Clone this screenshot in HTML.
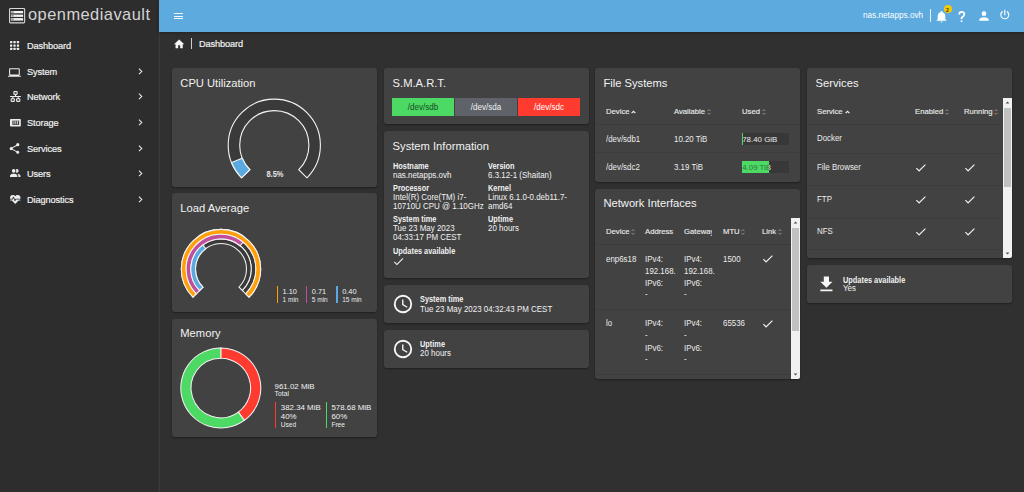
<!DOCTYPE html><html><head><meta charset="utf-8"><style>
*{margin:0;padding:0;box-sizing:border-box}
html,body{width:1024px;height:492px;overflow:hidden;background:#303030;font-family:"Liberation Sans", sans-serif}
.t{position:absolute;white-space:nowrap}
.card{position:absolute;background:#424242;border-radius:3px;box-shadow:0 1px 2px rgba(0,0,0,.35)}
svg{overflow:visible}
</style></head><body>
<div style="position:absolute;left:0.00px;top:0.00px;width:158.00px;height:492.00px;background:#2d2d2d"></div>
<div style="position:absolute;left:158.70px;top:0.00px;width:1.00px;height:492.00px;background:#3a3a3a"></div>
<svg style="position:absolute;left:9px;top:8px" width="16.2" height="15.4" viewBox="0 0 16.2 15.4">
<rect x="0.55" y="0.55" width="15.1" height="14.3" rx="0.9" fill="none" stroke="#d8d8d8" stroke-width="1.1"/>
<rect x="1.9" y="3.0" width="12.2" height="2.3" fill="#f2f2f2"/>
<rect x="1.9" y="6.6" width="12.2" height="2.3" fill="#f2f2f2"/>
<rect x="1.9" y="10.1" width="12.2" height="2.5" fill="#f2f2f2"/>
<rect x="2.2" y="3.3" width="2.6" height="1.7" fill="#9a9a9a"/>
<rect x="2.2" y="6.9" width="2.6" height="1.7" fill="#9a9a9a"/>
<rect x="2.2" y="10.4" width="2.6" height="1.9" fill="#9a9a9a"/>
</svg>
<div class="t" style="left:28.00px;top:5.02px;font-size:16.4px;line-height:18.84px;color:#d4d4d4;font-weight:400;letter-spacing:0.48px">openmediavault</div>
<div class="t" style="left:27.00px;top:41.00px;font-size:9.2px;line-height:10.57px;color:#f0f0f0;font-weight:400;-webkit-text-stroke:0.2px #f0f0f0;letter-spacing:-0.1px">Dashboard</div>
<div class="t" style="left:27.00px;top:67.00px;font-size:9.2px;line-height:10.57px;color:#f0f0f0;font-weight:400;-webkit-text-stroke:0.2px #f0f0f0;letter-spacing:-0.1px">System</div>
<svg style="position:absolute;left:133.70px;top:64.70px" width="12.80" height="12.80" viewBox="0 0 24 24" preserveAspectRatio="none"><path fill="#e8e8e8" d="M8.59,16.58L13.17,12L8.59,7.41L10,6L16,12L10,18L8.59,16.58Z"/></svg>
<div class="t" style="left:27.00px;top:92.00px;font-size:9.2px;line-height:10.57px;color:#f0f0f0;font-weight:400;-webkit-text-stroke:0.2px #f0f0f0;letter-spacing:-0.1px">Network</div>
<svg style="position:absolute;left:133.70px;top:90.30px" width="12.80" height="12.80" viewBox="0 0 24 24" preserveAspectRatio="none"><path fill="#e8e8e8" d="M8.59,16.58L13.17,12L8.59,7.41L10,6L16,12L10,18L8.59,16.58Z"/></svg>
<div class="t" style="left:27.00px;top:118.00px;font-size:9.2px;line-height:10.57px;color:#f0f0f0;font-weight:400;-webkit-text-stroke:0.2px #f0f0f0;letter-spacing:-0.1px">Storage</div>
<svg style="position:absolute;left:133.70px;top:115.90px" width="12.80" height="12.80" viewBox="0 0 24 24" preserveAspectRatio="none"><path fill="#e8e8e8" d="M8.59,16.58L13.17,12L8.59,7.41L10,6L16,12L10,18L8.59,16.58Z"/></svg>
<div class="t" style="left:27.00px;top:144.00px;font-size:9.2px;line-height:10.57px;color:#f0f0f0;font-weight:400;-webkit-text-stroke:0.2px #f0f0f0;letter-spacing:-0.1px">Services</div>
<svg style="position:absolute;left:133.70px;top:141.50px" width="12.80" height="12.80" viewBox="0 0 24 24" preserveAspectRatio="none"><path fill="#e8e8e8" d="M8.59,16.58L13.17,12L8.59,7.41L10,6L16,12L10,18L8.59,16.58Z"/></svg>
<div class="t" style="left:27.00px;top:169.00px;font-size:9.2px;line-height:10.57px;color:#f0f0f0;font-weight:400;-webkit-text-stroke:0.2px #f0f0f0;letter-spacing:-0.1px">Users</div>
<svg style="position:absolute;left:133.70px;top:167.10px" width="12.80" height="12.80" viewBox="0 0 24 24" preserveAspectRatio="none"><path fill="#e8e8e8" d="M8.59,16.58L13.17,12L8.59,7.41L10,6L16,12L10,18L8.59,16.58Z"/></svg>
<div class="t" style="left:27.00px;top:195.00px;font-size:9.2px;line-height:10.57px;color:#f0f0f0;font-weight:400;-webkit-text-stroke:0.2px #f0f0f0;letter-spacing:-0.1px">Diagnostics</div>
<svg style="position:absolute;left:133.70px;top:192.70px" width="12.80" height="12.80" viewBox="0 0 24 24" preserveAspectRatio="none"><path fill="#e8e8e8" d="M8.59,16.58L13.17,12L8.59,7.41L10,6L16,12L10,18L8.59,16.58Z"/></svg>
<svg style="position:absolute;left:10.3px;top:41.2px" width="9" height="9" viewBox="0 0 9 9"><rect x="0.0" y="0.0" width="2.3" height="2.3" rx="0.4" fill="#eeeeee"/><rect x="3.4" y="0.0" width="2.3" height="2.3" rx="0.4" fill="#eeeeee"/><rect x="6.8" y="0.0" width="2.3" height="2.3" rx="0.4" fill="#eeeeee"/><rect x="0.0" y="3.4" width="2.3" height="2.3" rx="0.4" fill="#eeeeee"/><rect x="3.4" y="3.4" width="2.3" height="2.3" rx="0.4" fill="#eeeeee"/><rect x="6.8" y="3.4" width="2.3" height="2.3" rx="0.4" fill="#eeeeee"/><rect x="0.0" y="6.8" width="2.3" height="2.3" rx="0.4" fill="#eeeeee"/><rect x="3.4" y="6.8" width="2.3" height="2.3" rx="0.4" fill="#eeeeee"/><rect x="6.8" y="6.8" width="2.3" height="2.3" rx="0.4" fill="#eeeeee"/></svg>
<svg style="position:absolute;left:8.30px;top:65.60px" width="12.90" height="12.90" viewBox="0 0 24 24" preserveAspectRatio="none"><path fill="#ececec" d="M4,6H20V16H4M20,18A2,2 0 0,0 22,16V6C22,4.89 21.1,4 20,4H4C2.89,4 2,4.89 2,6V16A2,2 0 0,0 4,18H0V20H24V18H20Z"/></svg>
<svg style="position:absolute;left:8.60px;top:89.80px" width="13.00" height="13.00" viewBox="0 0 24 24" preserveAspectRatio="none"><path fill="#ececec" d="M10,2C8.89,2 8,2.89 8,4V7C8,8.11 8.89,9 10,9H11V11H2V13H6V15H5C3.89,15 3,15.89 3,17V20C3,21.11 3.89,22 5,22H9C10.11,22 11,21.11 11,20V17C11,15.89 10.11,15 9,15H8V13H16V15H15C13.89,15 13,15.89 13,17V20C13,21.11 13.89,22 15,22H19C20.11,22 21,21.11 21,20V17C21,15.89 20.11,15 19,15H18V13H22V11H13V9H14C15.11,9 16,8.11 16,7V4C16,2.89 15.11,2 14,2H10M10,4H14V7H10V4M5,17H9V20H5V17M15,17H19V20H15V17Z"/></svg>
<svg style="position:absolute;left:9.6px;top:118.75px" width="10.8" height="7.4" viewBox="0 0 10.8 7.6" preserveAspectRatio="none">
<rect x="0" y="0" width="10.8" height="7.6" rx="0.7" fill="#ececec"/>
<rect x="2.4" y="1.7" width="6.7" height="4.3" fill="#2d2d2d"/>
<rect x="3.5" y="1.7" width="0.9" height="3.6" fill="#ececec"/>
<rect x="5.35" y="1.7" width="0.9" height="3.6" fill="#ececec"/>
<rect x="7.2" y="1.7" width="0.9" height="3.6" fill="#ececec"/>
</svg>
<svg style="position:absolute;left:8.40px;top:141.60px" width="13.00" height="13.00" viewBox="0 0 24 24" preserveAspectRatio="none"><path fill="#ececec" d="M18,16.08C17.24,16.08 16.56,16.38 16.04,16.85L8.91,12.7C8.96,12.47 9,12.24 9,12C9,11.76 8.96,11.53 8.91,11.3L15.96,7.19C16.5,7.69 17.21,8 18,8A3,3 0 0,0 21,5A3,3 0 0,0 18,2A3,3 0 0,0 15,5C15,5.24 15.04,5.47 15.09,5.7L8.04,9.81C7.5,9.31 6.79,9 6,9A3,3 0 0,0 3,12A3,3 0 0,0 6,15C6.79,15 7.5,14.69 8.04,14.19L15.16,18.34C15.11,18.55 15.08,18.77 15.08,19C15.08,20.61 16.39,21.91 18,21.91C19.61,21.91 20.92,20.61 20.92,19A2.92,2.92 0 0,0 18,16.08Z"/></svg>
<svg style="position:absolute;left:8.90px;top:166.50px" width="12.50" height="12.50" viewBox="0 0 24 24" preserveAspectRatio="none"><path fill="#ececec" d="M16 17V19H2V17S2 13 9 13 16 17 16 17M12.5 7.5A3.5 3.5 0 1 0 9 11A3.5 3.5 0 0 0 12.5 7.5M15.94 13A5.32 5.32 0 0 1 18 17V19H22V17S22 13.37 15.94 13M15 4A3.39 3.39 0 0 0 13.07 4.59A5 5 0 0 1 13.07 10.41A3.39 3.39 0 0 0 15 11A3.5 3.5 0 0 0 18.5 7.5A3.5 3.5 0 0 0 15 4Z"/></svg>
<svg style="position:absolute;left:8.90px;top:193.20px" width="12.50" height="12.50" viewBox="0 0 24 24" preserveAspectRatio="none"><path fill="#ececec" d="M7.5,4A5.5,5.5 0 0,0 2,9.5C2,10 2.09,10.5 2.22,11H6.3L7.57,7.63C7.87,6.83 9.05,6.75 9.43,7.63L11.5,13L12.09,11.58C12.22,11.25 12.57,11 13,11H21.78C21.910,10.5 22,10 22,9.5A5.5,5.5 0 0,0 16.5,4C14.64,4 13,4.93 12,6.34C11,4.93 9.36,4 7.5,4V4M3,12.5A1,1 0 0,0 2,13.5A1,1 0 0,0 3,14.5H5.44L11,20C12,20.9 12,20.9 13,20L18.56,14.5H21A1,1 0 0,0 22,13.5A1,1 0 0,0 21,12.5H13.4L12.47,14.8C12.07,15.81 10.92,15.67 10.55,14.830L8.5,9.5L7.54,11.83C7.39,12.21 7.05,12.5 6.6,12.5H3Z"/></svg>
<div style="position:absolute;left:158.70px;top:0.00px;width:865.30px;height:32.40px;background:#5caade;box-shadow:0 1px 3px rgba(0,0,0,.3)"></div>
<div style="position:absolute;left:173.70px;top:12.80px;width:9.50px;height:1.30px;background:#f4f8fb"></div>
<div style="position:absolute;left:173.70px;top:15.50px;width:9.50px;height:1.30px;background:#f4f8fb"></div>
<div style="position:absolute;left:173.70px;top:18.20px;width:9.50px;height:1.30px;background:#f4f8fb"></div>
<div class="t" style="left:863.00px;top:11.02px;font-size:8.2px;line-height:9.42px;color:#ffffff;font-weight:400;">nas.netapps.ovh</div>
<div style="position:absolute;left:930.30px;top:9.00px;width:0.90px;height:13.00px;background:#e8f2fa"></div>
<svg style="position:absolute;left:934.50px;top:9.50px" width="13.00" height="13.00" viewBox="0 0 24 24" preserveAspectRatio="none"><path fill="#ffffff" d="M21,19V20H3V19L5,17V11C5,7.9 7.03,5.17 10,4.29C10,4.19 10,4.1 10,4A2,2 0 0,1 12,2A2,2 0 0,1 14,4C14,4.1 14,4.19 14,4.29C16.97,5.17 19,7.9 19,11V17L21,19M14,21A2,2 0 0,1 12,23A2,2 0 0,1 10,21"/></svg>
<div style="position:absolute;left:943.5px;top:5.3px;width:8px;height:8px;border-radius:50%;background:#f5c800"></div>
<div class="t" style="left:747.50px;width:400px;text-align:center;top:8.02px;font-size:5px;line-height:5.75px;color:#333;font-weight:700;">2</div>
<svg style="position:absolute;left:955.00px;top:9.60px" width="13.60" height="13.20" viewBox="0 0 24 24" preserveAspectRatio="none"><path fill="#ffffff" d="M10,19H13V22H10V19M12,2C17.35,2.22 19.68,7.62 16.5,11.67C15.67,12.67 14.33,13.33 13.67,14.17C13,15 13,16 13,17H10C10,15.33 10,13.920 10.67,12.92C11.33,11.92 12.670,11.33 13.5,10.67C15.92,8.43 15.32,5.26 12,5A3,3 0 0,0 9,8H6A6,6 0 0,1 12,2Z"/></svg>
<svg style="position:absolute;left:977.00px;top:8.50px" width="14.00" height="14.00" viewBox="0 0 24 24" preserveAspectRatio="none"><path fill="#ffffff" d="M12,4A4,4 0 0,1 16,8A4,4 0 0,1 12,12A4,4 0 0,1 8,8A4,4 0 0,1 12,4M12,14C16.42,14 20,15.79 20,18V20H4V18C4,15.79 7.58,14 12,14Z"/></svg>
<svg style="position:absolute;left:998.30px;top:8.20px" width="13.60" height="13.60" viewBox="0 0 24 24" preserveAspectRatio="none"><path fill="#ffffff" d="M16.56,5.44L15.11,6.89C16.84,7.94 18,9.83 18,12A6,6 0 0,1 12,18A6,6 0 0,1 6,12C6,9.830 7.16,7.94 8.88,6.88L7.44,5.44C5.36,6.88 4,9.28 4,12A8,8 0 0,0 12,20A8,8 0 0,0 20,12C20,9.28 18.64,6.88 16.56,5.44M13,3H11V13H13"/></svg>
<svg style="position:absolute;left:172.70px;top:38.10px" width="12.30" height="12.30" viewBox="0 0 24 24" preserveAspectRatio="none"><path fill="#f6f6f6" d="M10,20V14H14V20H19V12H22L12,3L2,12H5V20H10Z"/></svg>
<div style="position:absolute;left:191.20px;top:38.00px;width:0.90px;height:10.80px;background:#cfcfcf"></div>
<div class="t" style="left:199.00px;top:39.00px;font-size:9.2px;line-height:10.57px;color:#f0f0f0;font-weight:400;-webkit-text-stroke:0.2px #f0f0f0;letter-spacing:-0.1px">Dashboard</div>
<div class="card" style="left:171.7px;top:68px;width:205.2px;height:119.00px"></div>
<div class="t" style="left:180.30px;top:77.01px;font-size:11.2px;line-height:12.87px;color:#f2f2f2;font-weight:400;">CPU Utilization</div>
<div class="card" style="left:171.7px;top:193.2px;width:205.2px;height:118.80px"></div>
<div class="t" style="left:180.30px;top:202.01px;font-size:11.2px;line-height:12.87px;color:#f2f2f2;font-weight:400;">Load Average</div>
<div class="card" style="left:171.7px;top:318.5px;width:205.2px;height:118.50px"></div>
<div class="t" style="left:180.30px;top:327.01px;font-size:11.2px;line-height:12.87px;color:#f2f2f2;font-weight:400;">Memory</div>
<div class="card" style="left:384px;top:68px;width:205.2px;height:56.00px"></div>
<div class="t" style="left:392.60px;top:77.01px;font-size:11.2px;line-height:12.87px;color:#f2f2f2;font-weight:400;">S.M.A.R.T.</div>
<div class="card" style="left:384px;top:130.7px;width:205.2px;height:147.10px"></div>
<div class="t" style="left:392.60px;top:140.01px;font-size:11.2px;line-height:12.87px;color:#f2f2f2;font-weight:400;">System Information</div>
<div class="card" style="left:384px;top:285px;width:205.2px;height:37.80px"></div>
<div class="card" style="left:384px;top:329.7px;width:205.2px;height:37.90px"></div>
<div class="card" style="left:594.8px;top:68px;width:205.2px;height:114.00px"></div>
<div class="t" style="left:603.40px;top:77.01px;font-size:11.2px;line-height:12.87px;color:#f2f2f2;font-weight:400;">File Systems</div>
<div class="card" style="left:594.8px;top:188.7px;width:205.2px;height:190.30px"></div>
<div class="t" style="left:603.40px;top:197.01px;font-size:11.2px;line-height:12.87px;color:#f2f2f2;font-weight:400;">Network Interfaces</div>
<div class="card" style="left:807px;top:68px;width:205.2px;height:190.30px"></div>
<div class="t" style="left:815.60px;top:77.01px;font-size:11.2px;line-height:12.87px;color:#f2f2f2;font-weight:400;">Services</div>
<div class="card" style="left:807px;top:265.3px;width:205.2px;height:37.50px"></div>
<svg style="position:absolute;left:0;top:0" width="1024" height="492" viewBox="0 0 1024 492">
<path d="M241.702,177.798 A46.1,46.1 0 1 1 306.898,177.798 L298.766,169.666 A34.6,34.6 0 1 0 249.834,169.666 Z" fill="#3a3a3a" stroke="#f4f4f4" stroke-width="1.1" stroke-linejoin="miter"/>
<path d="M241.702,177.798 A46.1,46.1 0 0 1 231.572,162.507 L242.231,158.189 A34.6,34.6 0 0 0 249.834,169.666 Z" fill="#5aa9e0" stroke="#f4f4f4" stroke-width="1.1"/>
<path d="M192.928,297.172 A39.7,39.7 0 1 1 249.072,297.172 L245.678,293.778 A34.9,34.9 0 1 0 196.322,293.778 Z" fill="#3a3a3a" stroke="#f4f4f4" stroke-width="1.05"/>
<path d="M196.322,293.778 A34.9,34.9 0 1 1 245.678,293.778 L242.355,290.455 A30.2,30.2 0 1 0 199.645,290.455 Z" fill="#3a3a3a" stroke="#f4f4f4" stroke-width="1.05"/>
<path d="M199.645,290.455 A30.2,30.2 0 1 1 242.355,290.455 L239.031,287.131 A25.5,25.5 0 1 0 202.969,287.131 Z" fill="#3a3a3a" stroke="#f4f4f4" stroke-width="1.05"/>
<path d="M192.928,297.172 A39.7,39.7 0 1 1 249.072,297.172 L245.678,293.778 A34.9,34.9 0 1 0 196.322,293.778 Z" fill="#ff9f0a" stroke="#f4f4f4" stroke-width="1.05"/>
<path d="M196.322,293.778 A34.9,34.9 0 0 1 243.092,242.082 L240.117,245.721 A30.2,30.2 0 0 0 199.645,290.455 Z" fill="#bf4f9c" stroke="#f4f4f4" stroke-width="1.05"/>
<path d="M199.645,290.455 A30.2,30.2 0 0 1 202.902,244.924 L205.718,248.686 A25.5,25.5 0 0 0 202.969,287.131 Z" fill="#5aa9e0" stroke="#f4f4f4" stroke-width="1.05"/>
<path d="M220.800,348.000 A40,40 0 0 1 244.311,420.361 L238.316,412.109 A29.8,29.8 0 0 0 220.800,358.200 Z" fill="#ff3b30" stroke="#f4f4f4" stroke-width="1.05"/>
<path d="M220.8,348 A40,40 0 1 0 244.311,420.361 L238.316,412.109 A29.8,29.8 0 1 1 220.8,358.2 Z" fill="#4cd964" stroke="#f4f4f4" stroke-width="1.05"/>
</svg>
<div class="t" style="left:74.50px;width:400px;text-align:center;top:170.02px;font-size:8.2px;line-height:9.42px;color:#e4e4e4;font-weight:700;transform:scaleX(0.92);transform-origin:center top;">8.5%</div>
<div style="position:absolute;left:276.60px;top:286.00px;width:1.60px;height:17.40px;background:#ff9f0a"></div>
<div class="t" style="left:282.60px;top:288.01px;font-size:7.4px;line-height:8.50px;color:#f0f0f0;font-weight:400;">1.10</div>
<div class="t" style="left:282.60px;top:295.99px;font-size:6.5px;line-height:7.47px;color:#ececec;font-weight:400;">1 min</div>
<div style="position:absolute;left:305.80px;top:286.00px;width:1.60px;height:17.40px;background:#bf4f9c"></div>
<div class="t" style="left:311.80px;top:288.01px;font-size:7.4px;line-height:8.50px;color:#f0f0f0;font-weight:400;">0.71</div>
<div class="t" style="left:311.80px;top:295.99px;font-size:6.5px;line-height:7.47px;color:#ececec;font-weight:400;">5 min</div>
<div style="position:absolute;left:336.20px;top:286.00px;width:1.60px;height:17.40px;background:#5aa9e0"></div>
<div class="t" style="left:342.20px;top:288.01px;font-size:7.4px;line-height:8.50px;color:#f0f0f0;font-weight:400;">0.40</div>
<div class="t" style="left:342.20px;top:295.99px;font-size:6.5px;line-height:7.47px;color:#ececec;font-weight:400;">15 min</div>
<div class="t" style="left:274.60px;top:382.00px;font-size:7.9px;line-height:9.08px;color:#f2f2f2;font-weight:400;">961.02 MiB</div>
<div class="t" style="left:274.60px;top:390.01px;font-size:6.8px;line-height:7.81px;color:#ececec;font-weight:400;">Total</div>
<div style="position:absolute;left:274.90px;top:402.00px;width:1.60px;height:26.00px;background:#ff3b30"></div>
<div class="t" style="left:280.80px;top:403.00px;font-size:7.9px;line-height:9.08px;color:#f2f2f2;font-weight:400;">382.34 MiB</div>
<div class="t" style="left:280.80px;top:412.00px;font-size:7.9px;line-height:9.08px;color:#f2f2f2;font-weight:400;">40%</div>
<div class="t" style="left:280.80px;top:421.00px;font-size:6.6px;line-height:7.58px;color:#ececec;font-weight:400;">Used</div>
<div style="position:absolute;left:325.50px;top:402.00px;width:1.60px;height:26.00px;background:#4cd964"></div>
<div class="t" style="left:331.40px;top:403.00px;font-size:7.9px;line-height:9.08px;color:#f2f2f2;font-weight:400;">578.68 MiB</div>
<div class="t" style="left:331.40px;top:412.00px;font-size:7.9px;line-height:9.08px;color:#f2f2f2;font-weight:400;">60%</div>
<div class="t" style="left:331.40px;top:421.00px;font-size:6.6px;line-height:7.58px;color:#ececec;font-weight:400;">Free</div>
<div style="position:absolute;left:392.00px;top:98.00px;width:62.00px;height:17.50px;background:#4cd964"></div>
<div class="t" style="left:223.00px;width:400px;text-align:center;top:103.00px;font-size:8.6px;line-height:9.88px;color:#1b4a23;font-weight:400;transform:scaleX(0.935);transform-origin:center top;">/dev/sdb</div>
<div style="position:absolute;left:455.00px;top:98.00px;width:62.00px;height:17.50px;background:#5f6369"></div>
<div class="t" style="left:286.00px;width:400px;text-align:center;top:103.00px;font-size:8.6px;line-height:9.88px;color:#f0f0f0;font-weight:400;transform:scaleX(0.935);transform-origin:center top;">/dev/sda</div>
<div style="position:absolute;left:518.30px;top:98.00px;width:62.20px;height:17.50px;background:#ff3b30"></div>
<div class="t" style="left:349.40px;width:400px;text-align:center;top:103.00px;font-size:8.6px;line-height:9.88px;color:#ffffff;font-weight:400;transform:scaleX(0.935);transform-origin:center top;">/dev/sdc</div>
<div class="t" style="left:392.50px;top:162.02px;font-size:8.2px;line-height:9.42px;color:#f2f2f2;font-weight:700;transform:scaleX(0.9);transform-origin:left top;">Hostname</div>
<div class="t" style="left:392.50px;top:170.99px;font-size:8.507px;line-height:9.77px;color:#f2f2f2;font-weight:400;transform:scaleX(0.935);transform-origin:left top;">nas.netapps.ovh</div>
<div class="t" style="left:392.50px;top:184.02px;font-size:8.2px;line-height:9.42px;color:#f2f2f2;font-weight:700;transform:scaleX(0.9);transform-origin:left top;">Processor</div>
<div class="t" style="left:392.50px;top:192.99px;font-size:8.507px;line-height:9.77px;color:#f2f2f2;font-weight:400;transform:scaleX(0.935);transform-origin:left top;">Intel(R) Core(TM) i7-</div>
<div class="t" style="left:392.50px;top:201.99px;font-size:8.507px;line-height:9.77px;color:#f2f2f2;font-weight:400;transform:scaleX(0.935);transform-origin:left top;">10710U CPU @ 1.10GHz</div>
<div class="t" style="left:392.50px;top:215.02px;font-size:8.2px;line-height:9.42px;color:#f2f2f2;font-weight:700;transform:scaleX(0.9);transform-origin:left top;">System time</div>
<div class="t" style="left:392.50px;top:223.99px;font-size:8.507px;line-height:9.77px;color:#f2f2f2;font-weight:400;transform:scaleX(0.935);transform-origin:left top;">Tue 23 May 2023</div>
<div class="t" style="left:392.50px;top:232.99px;font-size:8.507px;line-height:9.77px;color:#f2f2f2;font-weight:400;transform:scaleX(0.935);transform-origin:left top;">04:33:17 PM CEST</div>
<div class="t" style="left:392.50px;top:247.02px;font-size:8.2px;line-height:9.42px;color:#f2f2f2;font-weight:700;transform:scaleX(0.9);transform-origin:left top;">Updates available</div>
<svg style="position:absolute;left:392.40px;top:255.00px" width="13.00" height="13.00" viewBox="0 0 24 24" preserveAspectRatio="none"><path fill="#f0f0f0" d="M21,7L9,19L3.5,13.5L4.91,12.09L9,16.17L19.59,5.59L21,7Z"/></svg>
<div class="t" style="left:488.40px;top:162.02px;font-size:8.2px;line-height:9.42px;color:#f2f2f2;font-weight:700;transform:scaleX(0.9);transform-origin:left top;">Version</div>
<div class="t" style="left:488.40px;top:170.99px;font-size:8.507px;line-height:9.77px;color:#f2f2f2;font-weight:400;transform:scaleX(0.935);transform-origin:left top;">6.3.12-1 (Shaitan)</div>
<div class="t" style="left:488.40px;top:184.02px;font-size:8.2px;line-height:9.42px;color:#f2f2f2;font-weight:700;transform:scaleX(0.9);transform-origin:left top;">Kernel</div>
<div class="t" style="left:488.40px;top:192.99px;font-size:8.507px;line-height:9.77px;color:#f2f2f2;font-weight:400;transform:scaleX(0.935);transform-origin:left top;">Linux 6.1.0-0.deb11.7-</div>
<div class="t" style="left:488.40px;top:201.99px;font-size:8.507px;line-height:9.77px;color:#f2f2f2;font-weight:400;transform:scaleX(0.935);transform-origin:left top;">amd64</div>
<div class="t" style="left:488.40px;top:215.02px;font-size:8.2px;line-height:9.42px;color:#f2f2f2;font-weight:700;transform:scaleX(0.9);transform-origin:left top;">Uptime</div>
<div class="t" style="left:488.40px;top:223.99px;font-size:8.507px;line-height:9.77px;color:#f2f2f2;font-weight:400;transform:scaleX(0.935);transform-origin:left top;">20 hours</div>
<svg style="position:absolute;left:391.90px;top:292.90px" width="22.00" height="22.00" viewBox="0 0 24 24" preserveAspectRatio="none"><path fill="#f6f6f6" d="M12,20A8,8 0 0,0 20,12A8,8 0 0,0 12,4A8,8 0 0,0 4,12A8,8 0 0,0 12,20M12,2A10,10 0 0,1 22,12A10,10 0 0,1 12,22C6.47,22 2,17.5 2,12A10,10 0 0,1 12,2M12.5,7V12.25L17,14.92L16.25,16.15L11,13V7H12.5Z"/></svg>
<div class="t" style="left:420.10px;top:295.02px;font-size:8.2px;line-height:9.42px;color:#f2f2f2;font-weight:700;transform:scaleX(0.9);transform-origin:left top;">System time</div>
<div class="t" style="left:420.30px;top:304.99px;font-size:8.507px;line-height:9.77px;color:#f2f2f2;font-weight:400;transform:scaleX(0.935);transform-origin:left top;">Tue 23 May 2023 04:32:43 PM CEST</div>
<svg style="position:absolute;left:391.90px;top:337.60px" width="22.00" height="22.00" viewBox="0 0 24 24" preserveAspectRatio="none"><path fill="#f6f6f6" d="M12,20A8,8 0 0,0 20,12A8,8 0 0,0 12,4A8,8 0 0,0 4,12A8,8 0 0,0 12,20M12,2A10,10 0 0,1 22,12A10,10 0 0,1 12,22C6.47,22 2,17.5 2,12A10,10 0 0,1 12,2M12.5,7V12.25L17,14.92L16.25,16.15L11,13V7H12.5Z"/></svg>
<div class="t" style="left:420.10px;top:340.02px;font-size:8.2px;line-height:9.42px;color:#f2f2f2;font-weight:700;transform:scaleX(0.9);transform-origin:left top;">Uptime</div>
<div class="t" style="left:420.30px;top:348.99px;font-size:8.507px;line-height:9.77px;color:#f2f2f2;font-weight:400;transform:scaleX(0.935);transform-origin:left top;">20 hours</div>
<div class="t" style="left:605.60px;top:107.01px;font-size:8.1px;line-height:9.31px;color:#e8e8e8;font-weight:400;transform:scaleX(0.95);transform-origin:left top;-webkit-text-stroke:0.15px #e8e8e8;">Device</div>
<svg style="position:absolute;left:630.70px;top:110.00px" width="5" height="4" viewBox="0 0 5 4"><path d="M0.6,3.2 L2.5,1.3 L4.4,3.2" fill="none" stroke="#f0f0f0" stroke-width="1.2"/></svg>
<div class="t" style="left:673.70px;top:107.01px;font-size:8.1px;line-height:9.31px;color:#e8e8e8;font-weight:400;transform:scaleX(0.95);transform-origin:left top;-webkit-text-stroke:0.15px #e8e8e8;">Available</div>
<svg style="position:absolute;left:706.70px;top:109.00px" width="4" height="6" viewBox="0 0 4 6"><path d="M0.5,2.1 L2,0.6 L3.5,2.1" fill="none" stroke="#a8a8a8" stroke-width="0.75"/><path d="M0.5,3.9 L2,5.4 L3.5,3.9" fill="none" stroke="#a8a8a8" stroke-width="0.75"/></svg>
<div class="t" style="left:741.80px;top:107.01px;font-size:8.1px;line-height:9.31px;color:#e8e8e8;font-weight:400;transform:scaleX(0.95);transform-origin:left top;-webkit-text-stroke:0.15px #e8e8e8;">Used</div>
<svg style="position:absolute;left:762.10px;top:109.00px" width="4" height="6" viewBox="0 0 4 6"><path d="M0.5,2.1 L2,0.6 L3.5,2.1" fill="none" stroke="#a8a8a8" stroke-width="0.75"/><path d="M0.5,3.9 L2,5.4 L3.5,3.9" fill="none" stroke="#a8a8a8" stroke-width="0.75"/></svg>
<div style="position:absolute;left:594.80px;top:124.00px;width:205.20px;height:0.70px;background:#3c3c3c"></div>
<div style="position:absolute;left:594.80px;top:152.40px;width:205.20px;height:0.70px;background:#3c3c3c"></div>
<div class="t" style="left:605.60px;top:134.99px;font-size:8.453px;line-height:9.71px;color:#ececec;font-weight:400;transform:scaleX(0.935);transform-origin:left top;">/dev/sdb1</div>
<div class="t" style="left:673.70px;top:134.99px;font-size:8.453px;line-height:9.71px;color:#ececec;font-weight:400;transform:scaleX(0.935);transform-origin:left top;">10.20 TiB</div>
<div class="t" style="left:605.60px;top:162.99px;font-size:8.453px;line-height:9.71px;color:#ececec;font-weight:400;transform:scaleX(0.935);transform-origin:left top;">/dev/sdc2</div>
<div class="t" style="left:673.70px;top:162.99px;font-size:8.453px;line-height:9.71px;color:#ececec;font-weight:400;transform:scaleX(0.935);transform-origin:left top;">3.19 TiB</div>
<div style="position:absolute;left:741.80px;top:132.70px;width:47.50px;height:12.00px;background:#383838"></div>
<div class="t" style="left:742.20px;top:135.00px;font-size:7.9px;line-height:9.08px;color:#ececec;font-weight:400;">78.40 GiB</div>
<div style="position:absolute;left:741.8px;top:132.7px;width:1.04px;height:12px;background:#4cd964;overflow:hidden">
<div class="t" style="left:0.4px;top:1.62px;font-size:7.9px;line-height:9.08px;color:#2b7a3a">78.40 GiB</div></div>
<div style="position:absolute;left:741.80px;top:160.60px;width:47.50px;height:12.00px;background:#383838"></div>
<div class="t" style="left:742.20px;top:163.00px;font-size:7.9px;line-height:9.08px;color:#ececec;font-weight:400;">4.09 TiB</div>
<div style="position:absolute;left:741.8px;top:160.6px;width:27.07px;height:12px;background:#4cd964;overflow:hidden">
<div class="t" style="left:0.4px;top:2.02px;font-size:7.9px;line-height:9.08px;color:#2b7a3a">4.09 TiB</div></div>
<div class="t" style="left:605.70px;top:227.01px;font-size:8.1px;line-height:9.31px;color:#e8e8e8;font-weight:400;transform:scaleX(0.95);transform-origin:left top;-webkit-text-stroke:0.15px #e8e8e8;">Device</div>
<svg style="position:absolute;left:631.30px;top:229.00px" width="4" height="6" viewBox="0 0 4 6"><path d="M0.5,2.1 L2,0.6 L3.5,2.1" fill="none" stroke="#a8a8a8" stroke-width="0.75"/><path d="M0.5,3.9 L2,5.4 L3.5,3.9" fill="none" stroke="#a8a8a8" stroke-width="0.75"/></svg>
<div class="t" style="left:644.70px;top:227.01px;font-size:8.1px;line-height:9.31px;color:#e8e8e8;font-weight:400;transform:scaleX(0.95);transform-origin:left top;-webkit-text-stroke:0.15px #e8e8e8;">Address</div>
<div style="position:absolute;left:683.7px;top:222px;width:28.8px;height:18px;overflow:hidden">
<div class="t" style="left:0.00px;top:5.01px;font-size:8.1px;line-height:9.31px;color:#e8e8e8;font-weight:400;transform:scaleX(0.95);transform-origin:left top;-webkit-text-stroke:0.15px #e8e8e8;">Gateway</div>
</div>
<div class="t" style="left:723.00px;top:227.01px;font-size:8.1px;line-height:9.31px;color:#e8e8e8;font-weight:400;transform:scaleX(0.95);transform-origin:left top;-webkit-text-stroke:0.15px #e8e8e8;">MTU</div>
<svg style="position:absolute;left:741.00px;top:229.00px" width="4" height="6" viewBox="0 0 4 6"><path d="M0.5,2.1 L2,0.6 L3.5,2.1" fill="none" stroke="#a8a8a8" stroke-width="0.75"/><path d="M0.5,3.9 L2,5.4 L3.5,3.9" fill="none" stroke="#a8a8a8" stroke-width="0.75"/></svg>
<div class="t" style="left:761.80px;top:227.01px;font-size:8.1px;line-height:9.31px;color:#e8e8e8;font-weight:400;transform:scaleX(0.95);transform-origin:left top;-webkit-text-stroke:0.15px #e8e8e8;">Link</div>
<svg style="position:absolute;left:777.80px;top:229.00px" width="4" height="6" viewBox="0 0 4 6"><path d="M0.5,2.1 L2,0.6 L3.5,2.1" fill="none" stroke="#a8a8a8" stroke-width="0.75"/><path d="M0.5,3.9 L2,5.4 L3.5,3.9" fill="none" stroke="#a8a8a8" stroke-width="0.75"/></svg>
<div style="position:absolute;left:594.80px;top:244.00px;width:196.20px;height:1.00px;background:#3c3c3c"></div>
<div style="position:absolute;left:594.80px;top:309.20px;width:196.20px;height:1.00px;background:#3c3c3c"></div>
<div style="position:absolute;left:594.80px;top:373.50px;width:196.20px;height:1.00px;background:#3c3c3c"></div>
<div class="t" style="left:605.70px;top:254.99px;font-size:8.453px;line-height:9.71px;color:#ececec;font-weight:400;transform:scaleX(0.935);transform-origin:left top;">enp6s18</div>
<div class="t" style="left:644.70px;top:254.99px;font-size:8.453px;line-height:9.71px;color:#ececec;font-weight:400;transform:scaleX(0.935);transform-origin:left top;">IPv4:</div>
<div class="t" style="left:644.70px;top:266.99px;font-size:8.453px;line-height:9.71px;color:#ececec;font-weight:400;transform:scaleX(0.935);transform-origin:left top;">192.168.</div>
<div class="t" style="left:644.70px;top:278.99px;font-size:8.453px;line-height:9.71px;color:#ececec;font-weight:400;transform:scaleX(0.935);transform-origin:left top;">IPv6:</div>
<div class="t" style="left:644.70px;top:289.99px;font-size:8.453px;line-height:9.71px;color:#ececec;font-weight:400;transform:scaleX(0.935);transform-origin:left top;">-</div>
<div class="t" style="left:683.70px;top:254.99px;font-size:8.453px;line-height:9.71px;color:#ececec;font-weight:400;transform:scaleX(0.935);transform-origin:left top;">IPv4:</div>
<div class="t" style="left:683.70px;top:266.99px;font-size:8.453px;line-height:9.71px;color:#ececec;font-weight:400;transform:scaleX(0.935);transform-origin:left top;">192.168.</div>
<div class="t" style="left:683.70px;top:278.99px;font-size:8.453px;line-height:9.71px;color:#ececec;font-weight:400;transform:scaleX(0.935);transform-origin:left top;">IPv6:</div>
<div class="t" style="left:683.70px;top:289.99px;font-size:8.453px;line-height:9.71px;color:#ececec;font-weight:400;transform:scaleX(0.935);transform-origin:left top;">-</div>
<div class="t" style="left:723.00px;top:254.99px;font-size:8.453px;line-height:9.71px;color:#ececec;font-weight:400;transform:scaleX(0.935);transform-origin:left top;">1500</div>
<svg style="position:absolute;left:760.83px;top:252.06px" width="13.50" height="13.50" viewBox="0 0 24 24" preserveAspectRatio="none"><path fill="#f0f0f0" d="M21,7L9,19L3.5,13.5L4.91,12.09L9,16.17L19.59,5.59L21,7Z"/></svg>
<div class="t" style="left:605.70px;top:318.99px;font-size:8.453px;line-height:9.71px;color:#ececec;font-weight:400;transform:scaleX(0.935);transform-origin:left top;">lo</div>
<div class="t" style="left:644.70px;top:318.99px;font-size:8.453px;line-height:9.71px;color:#ececec;font-weight:400;transform:scaleX(0.935);transform-origin:left top;">IPv4:</div>
<div class="t" style="left:644.70px;top:330.99px;font-size:8.453px;line-height:9.71px;color:#ececec;font-weight:400;transform:scaleX(0.935);transform-origin:left top;">-</div>
<div class="t" style="left:644.70px;top:343.99px;font-size:8.453px;line-height:9.71px;color:#ececec;font-weight:400;transform:scaleX(0.935);transform-origin:left top;">IPv6:</div>
<div class="t" style="left:644.70px;top:354.99px;font-size:8.453px;line-height:9.71px;color:#ececec;font-weight:400;transform:scaleX(0.935);transform-origin:left top;">-</div>
<div class="t" style="left:683.70px;top:318.99px;font-size:8.453px;line-height:9.71px;color:#ececec;font-weight:400;transform:scaleX(0.935);transform-origin:left top;">IPv4:</div>
<div class="t" style="left:683.70px;top:330.99px;font-size:8.453px;line-height:9.71px;color:#ececec;font-weight:400;transform:scaleX(0.935);transform-origin:left top;">-</div>
<div class="t" style="left:683.70px;top:343.99px;font-size:8.453px;line-height:9.71px;color:#ececec;font-weight:400;transform:scaleX(0.935);transform-origin:left top;">IPv6:</div>
<div class="t" style="left:683.70px;top:354.99px;font-size:8.453px;line-height:9.71px;color:#ececec;font-weight:400;transform:scaleX(0.935);transform-origin:left top;">-</div>
<div class="t" style="left:723.00px;top:318.99px;font-size:8.453px;line-height:9.71px;color:#ececec;font-weight:400;transform:scaleX(0.935);transform-origin:left top;">65536</div>
<svg style="position:absolute;left:760.83px;top:317.46px" width="13.50" height="13.50" viewBox="0 0 24 24" preserveAspectRatio="none"><path fill="#f0f0f0" d="M21,7L9,19L3.5,13.5L4.91,12.09L9,16.17L19.59,5.59L21,7Z"/></svg>
<div style="position:absolute;left:791.00px;top:218.00px;width:9.00px;height:160.50px;background:#f1f1f1;border-bottom-right-radius:2px"></div>
<div style="position:absolute;left:792.00px;top:228.00px;width:7.00px;height:103.00px;background:#c1c1c1"></div>
<svg style="position:absolute;left:791px;top:218px" width="9" height="9" viewBox="0 0 9 9"><path d="M2.6,5.4 L4.5,3.4 L6.4,5.4Z" fill="#505050"/></svg>
<svg style="position:absolute;left:791px;top:369.5px" width="9" height="9" viewBox="0 0 9 9"><path d="M2.6,3.6 L4.5,5.6 L6.4,3.6Z" fill="#505050"/></svg>
<div class="t" style="left:816.60px;top:107.01px;font-size:8.1px;line-height:9.31px;color:#e8e8e8;font-weight:400;transform:scaleX(0.95);transform-origin:left top;-webkit-text-stroke:0.15px #e8e8e8;">Service</div>
<svg style="position:absolute;left:844.70px;top:110.00px" width="5" height="4" viewBox="0 0 5 4"><path d="M0.6,3.2 L2.5,1.3 L4.4,3.2" fill="none" stroke="#f0f0f0" stroke-width="1.2"/></svg>
<div class="t" style="left:914.50px;top:107.01px;font-size:8.1px;line-height:9.31px;color:#e8e8e8;font-weight:400;transform:scaleX(0.95);transform-origin:left top;-webkit-text-stroke:0.15px #e8e8e8;">Enabled</div>
<svg style="position:absolute;left:945.00px;top:109.00px" width="4" height="6" viewBox="0 0 4 6"><path d="M0.5,2.1 L2,0.6 L3.5,2.1" fill="none" stroke="#a8a8a8" stroke-width="0.75"/><path d="M0.5,3.9 L2,5.4 L3.5,3.9" fill="none" stroke="#a8a8a8" stroke-width="0.75"/></svg>
<div class="t" style="left:963.50px;top:107.01px;font-size:8.1px;line-height:9.31px;color:#e8e8e8;font-weight:400;transform:scaleX(0.95);transform-origin:left top;-webkit-text-stroke:0.15px #e8e8e8;">Running</div>
<svg style="position:absolute;left:994.00px;top:109.00px" width="4" height="6" viewBox="0 0 4 6"><path d="M0.5,2.1 L2,0.6 L3.5,2.1" fill="none" stroke="#a8a8a8" stroke-width="0.75"/><path d="M0.5,3.9 L2,5.4 L3.5,3.9" fill="none" stroke="#a8a8a8" stroke-width="0.75"/></svg>
<div style="position:absolute;left:807.00px;top:124.20px;width:195.50px;height:0.70px;background:#3c3c3c"></div>
<div style="position:absolute;left:807.00px;top:152.75px;width:195.50px;height:0.70px;background:#3c3c3c"></div>
<div style="position:absolute;left:807.00px;top:185.00px;width:195.50px;height:0.70px;background:#3c3c3c"></div>
<div style="position:absolute;left:807.00px;top:217.50px;width:195.50px;height:0.70px;background:#3c3c3c"></div>
<div style="position:absolute;left:807.00px;top:249.40px;width:195.50px;height:0.70px;background:#3c3c3c"></div>
<div class="t" style="left:816.60px;top:133.99px;font-size:8.453px;line-height:9.71px;color:#ececec;font-weight:400;transform:scaleX(0.935);transform-origin:left top;">Docker</div>
<div class="t" style="left:816.60px;top:162.99px;font-size:8.453px;line-height:9.71px;color:#ececec;font-weight:400;transform:scaleX(0.935);transform-origin:left top;">File Browser</div>
<div class="t" style="left:816.60px;top:194.99px;font-size:8.453px;line-height:9.71px;color:#ececec;font-weight:400;transform:scaleX(0.935);transform-origin:left top;">FTP</div>
<div class="t" style="left:816.60px;top:226.99px;font-size:8.453px;line-height:9.71px;color:#ececec;font-weight:400;transform:scaleX(0.935);transform-origin:left top;">NFS</div>
<svg style="position:absolute;left:914.03px;top:160.86px" width="13.50" height="13.50" viewBox="0 0 24 24" preserveAspectRatio="none"><path fill="#f0f0f0" d="M21,7L9,19L3.5,13.5L4.91,12.09L9,16.17L19.59,5.59L21,7Z"/></svg>
<svg style="position:absolute;left:963.23px;top:160.86px" width="13.50" height="13.50" viewBox="0 0 24 24" preserveAspectRatio="none"><path fill="#f0f0f0" d="M21,7L9,19L3.5,13.5L4.91,12.09L9,16.17L19.59,5.59L21,7Z"/></svg>
<svg style="position:absolute;left:914.03px;top:193.16px" width="13.50" height="13.50" viewBox="0 0 24 24" preserveAspectRatio="none"><path fill="#f0f0f0" d="M21,7L9,19L3.5,13.5L4.91,12.09L9,16.17L19.59,5.59L21,7Z"/></svg>
<svg style="position:absolute;left:963.23px;top:193.16px" width="13.50" height="13.50" viewBox="0 0 24 24" preserveAspectRatio="none"><path fill="#f0f0f0" d="M21,7L9,19L3.5,13.5L4.91,12.09L9,16.17L19.59,5.59L21,7Z"/></svg>
<svg style="position:absolute;left:914.03px;top:225.46px" width="13.50" height="13.50" viewBox="0 0 24 24" preserveAspectRatio="none"><path fill="#f0f0f0" d="M21,7L9,19L3.5,13.5L4.91,12.09L9,16.17L19.59,5.59L21,7Z"/></svg>
<svg style="position:absolute;left:963.23px;top:225.46px" width="13.50" height="13.50" viewBox="0 0 24 24" preserveAspectRatio="none"><path fill="#f0f0f0" d="M21,7L9,19L3.5,13.5L4.91,12.09L9,16.17L19.59,5.59L21,7Z"/></svg>
<div style="position:absolute;left:1002.70px;top:97.70px;width:9.00px;height:160.30px;background:#f1f1f1;border-bottom-right-radius:2px"></div>
<div style="position:absolute;left:1003.70px;top:107.80px;width:7.00px;height:79.50px;background:#c1c1c1"></div>
<svg style="position:absolute;left:1002.7px;top:97.7px" width="9" height="9" viewBox="0 0 9 9"><path d="M2.6,5.4 L4.5,3.4 L6.4,5.4Z" fill="#505050"/></svg>
<svg style="position:absolute;left:1002.7px;top:249px" width="9" height="9" viewBox="0 0 9 9"><path d="M2.6,3.6 L4.5,5.6 L6.4,3.6Z" fill="#505050"/></svg>
<svg style="position:absolute;left:815.50px;top:273.60px" width="20.80" height="20.80" viewBox="0 0 24 24" preserveAspectRatio="none"><path fill="#f6f6f6" d="M5,20H19V18H5M19,9H15V3H9V9H5L12,16L19,9Z"/></svg>
<div class="t" style="left:843.20px;top:276.02px;font-size:8.2px;line-height:9.42px;color:#f2f2f2;font-weight:700;transform:scaleX(0.9);transform-origin:left top;">Updates available</div>
<div class="t" style="left:843.20px;top:283.99px;font-size:8.507px;line-height:9.77px;color:#f2f2f2;font-weight:400;transform:scaleX(0.935);transform-origin:left top;">Yes</div>
</body></html>
